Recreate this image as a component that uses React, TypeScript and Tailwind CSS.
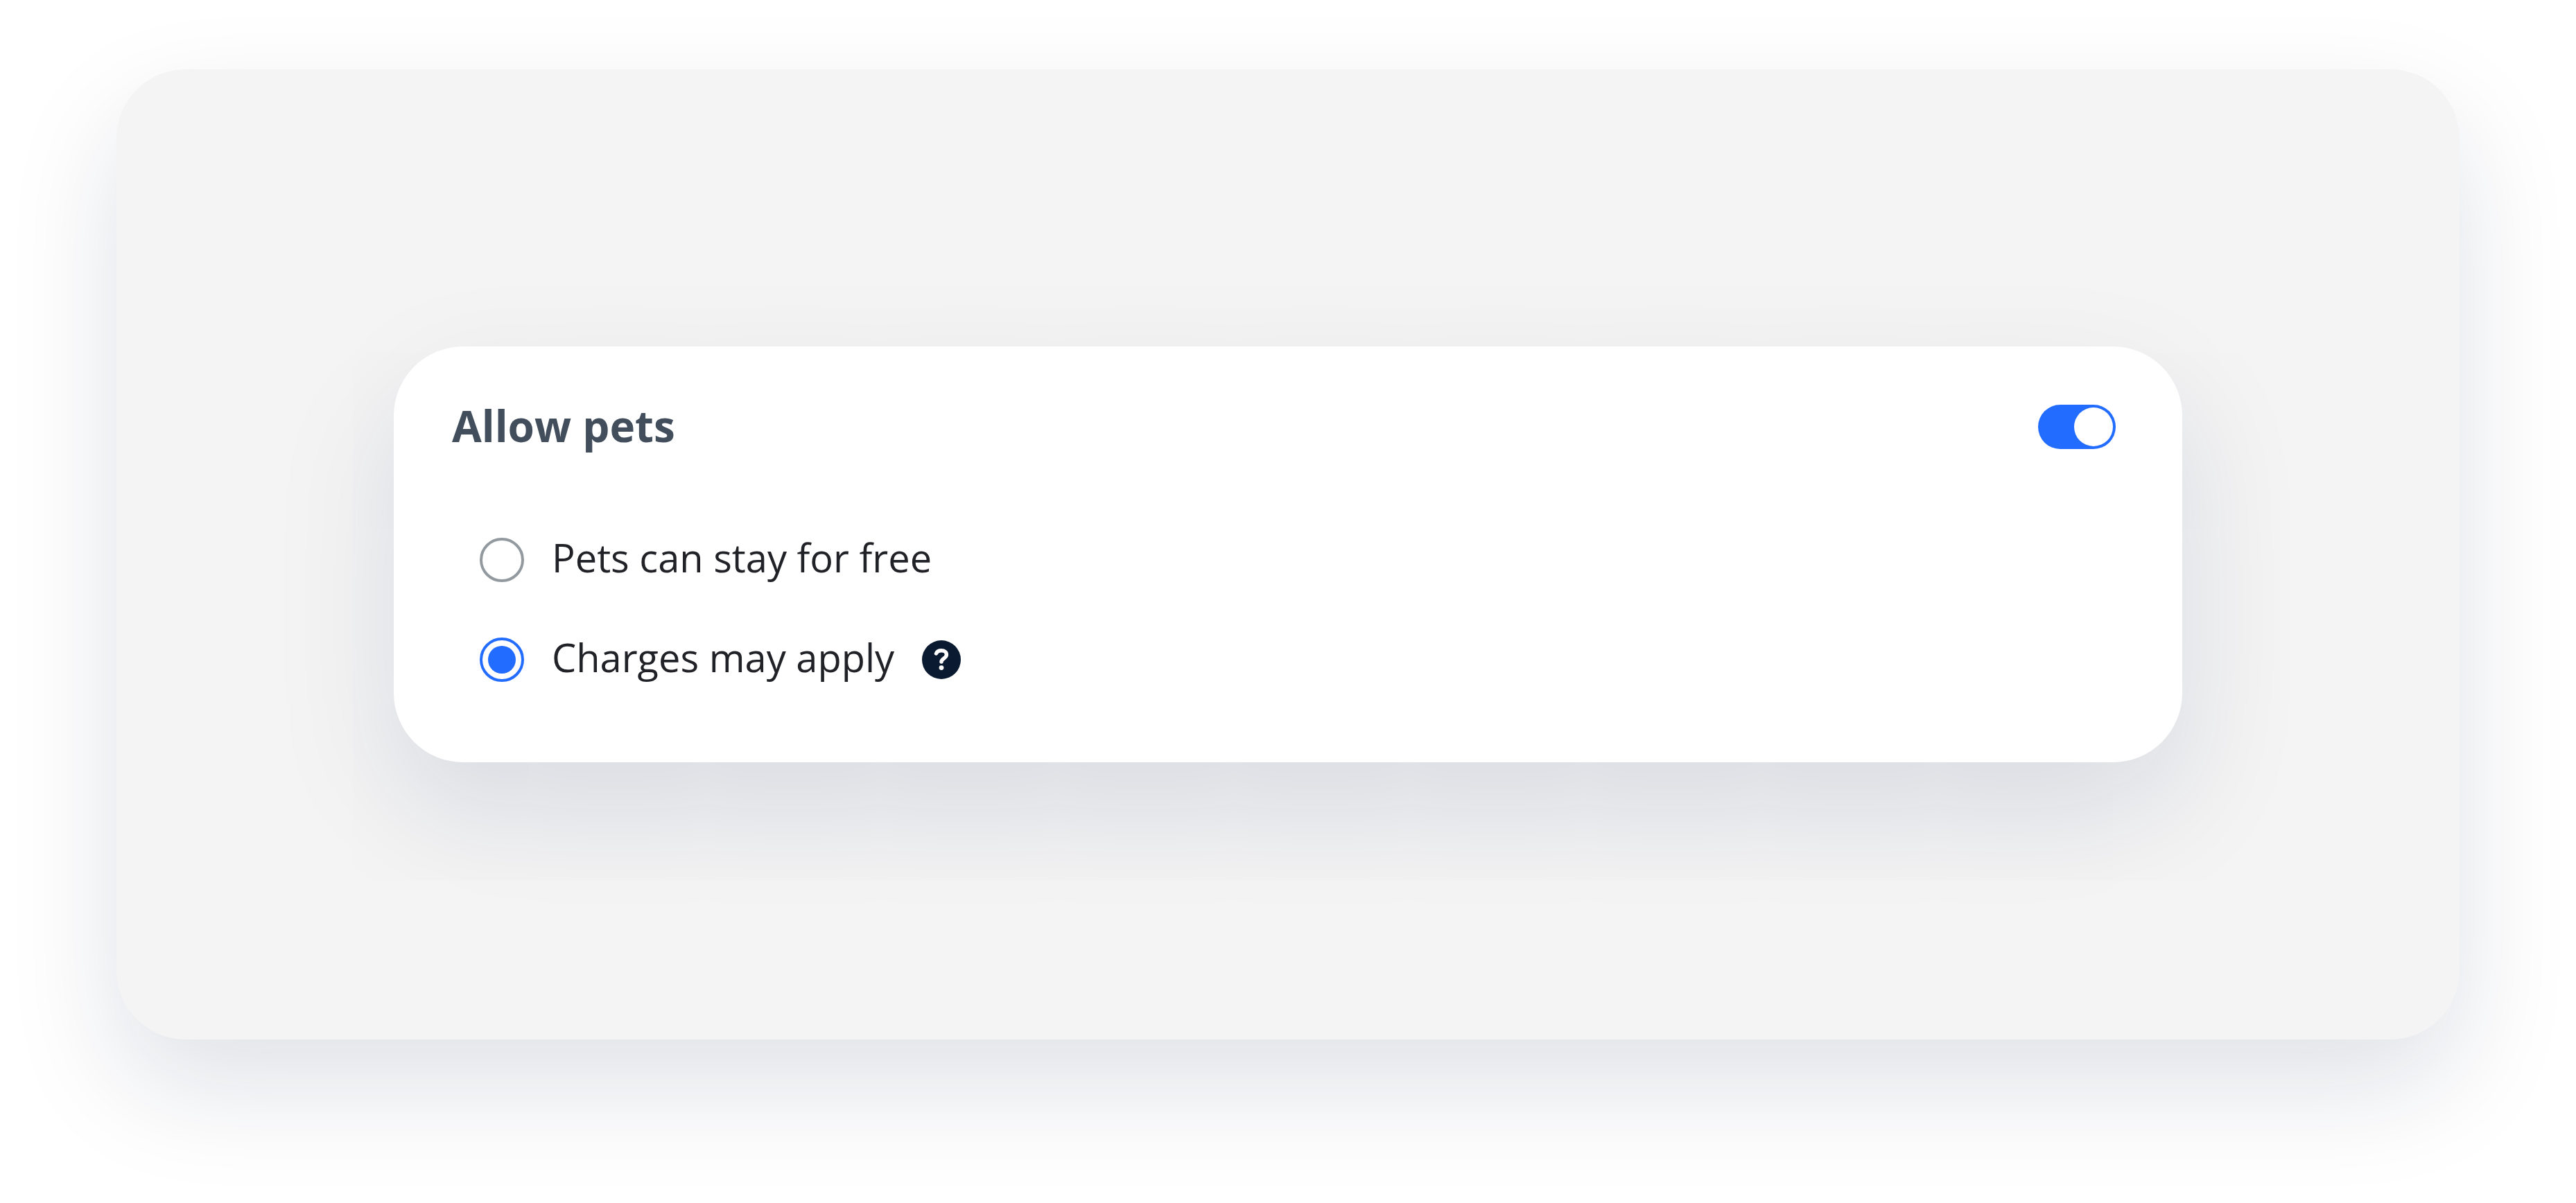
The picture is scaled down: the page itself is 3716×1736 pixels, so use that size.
import { useState } from "react";

type PetPolicy = "free" | "charges";

const policies: { value: PetPolicy; label: string; help?: string }[] = [
  { value: "free", label: "Pets can stay for free" },
  { value: "charges", label: "Charges may apply", help: "About pet charges" },
];

function HelpIcon() {
  return (
    <svg viewBox="0 0 56 56" className="size-14" fill="none" aria-hidden="true">
      <circle cx="28" cy="28" r="28" fill="#0a1a30" />
      <path
        d="M20.5 19C21.8 15.8 24.5 14.8 28 14.8C32.3 14.8 35.4 17 35.4 20.8C35.4 26 28 26.5 28 31"
        stroke="#fff"
        strokeWidth="5.4"
        strokeLinecap="round"
        strokeLinejoin="round"
      />
      <circle cx="28" cy="39.6" r="3.4" fill="#fff" />
    </svg>
  );
}

export default function App() {
  const [allowPets, setAllowPets] = useState(true);
  const [policy, setPolicy] = useState<PetPolicy>("charges");

  return (
    <main className="min-h-screen overflow-hidden bg-white p-8 font-['Open_Sans',sans-serif] 2xl:px-42 2xl:py-25">
      <div className="rounded-[100px] bg-[#f4f4f4] p-8 shadow-[0_68px_160px_rgba(14,32,72,0.13)] 2xl:p-100">
        <section className="rounded-[100px] bg-white pt-21 pr-24 pb-29 pl-21 shadow-[0_68px_180px_rgba(14,36,88,0.12)]">
          <div className="flex h-16 items-center justify-between">
            <label htmlFor="allow-pets" className="pb-1 text-[62px] leading-[60px] font-bold text-[#424e5c]">
              Allow pets
            </label>
            <input
              id="allow-pets"
              type="checkbox"
              role="switch"
              checked={allowPets}
              onChange={(e) => setAllowPets(e.target.checked)}
              className="flex h-16 w-28 shrink-0 cursor-pointer appearance-none rounded-full bg-[#939a9f] p-1 before:size-14 before:rounded-full before:bg-white checked:justify-end checked:bg-[#226cff]"
            />
          </div>

          {allowPets && (
            <div role="radiogroup" aria-label="Pet policy" className="mt-32 ml-10 flex flex-col gap-20">
              {policies.map(({ value, label, help }) => (
                <div key={value} className="flex h-16 items-center gap-10">
                  <input
                    id={value}
                    type="radio"
                    name="pet-policy"
                    checked={policy === value}
                    onChange={() => setPolicy(value)}
                    className="size-16 shrink-0 cursor-pointer appearance-none rounded-full border-4 border-[#939a9f] bg-clip-content p-2 checked:border-[#226cff] checked:bg-[#226cff]"
                  />
                  <label htmlFor={value} className="pb-2 text-[56px] leading-[56px] text-[#212227]">
                    {label}
                  </label>
                  {help && (
                    <button type="button" aria-label={help} className="cursor-pointer">
                      <HelpIcon />
                    </button>
                  )}
                </div>
              ))}
            </div>
          )}
        </section>
      </div>
    </main>
  );
}
